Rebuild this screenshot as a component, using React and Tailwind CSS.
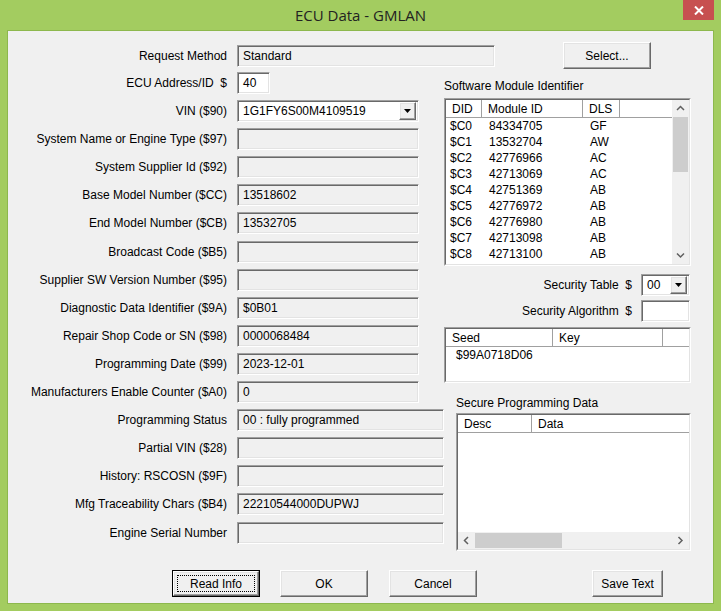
const SUNKEN =
  "border border-t-[#a0a0a0] border-l-[#a0a0a0] border-b-white border-r-white shadow-[inset_1px_1px_0_#696969,inset_-1px_-1px_0_#e3e3e3]";
const RAISED =
  "bg-[#f0f0f0] border border-t-white border-l-white border-b-[#696969] border-r-[#696969] shadow-[inset_-1px_-1px_0_#a0a0a0,inset_1px_1px_0_#e3e3e3]";

// filas de la columna izquierda
const leftRows = [
  { label: "ECU Address/ID  $", value: "40", w: "w-[33px]", white: true },
  { label: "VIN ($90)", value: "1G1FY6S00M4109519", combo: true },
  { label: "System Name or Engine Type ($97)", value: "", w: "w-[182px]" },
  { label: "System Supplier Id ($92)", value: "", w: "w-[182px]" },
  { label: "Base Model Number ($CC)", value: "13518602", w: "w-[182px]" },
  { label: "End Model Number ($CB)", value: "13532705", w: "w-[182px]" },
  { label: "Broadcast Code ($B5)", value: "", w: "w-[182px]" },
  { label: "Supplier SW Version Number ($95)", value: "", w: "w-[182px]" },
  { label: "Diagnostic Data Identifier ($9A)", value: "$0B01", w: "w-[182px]" },
  { label: "Repair Shop Code or SN ($98)", value: "0000068484", w: "w-[182px]" },
  { label: "Programming Date ($99)", value: "2023-12-01", w: "w-[182px]" },
  { label: "Manufacturers Enable Counter ($A0)", value: "0", w: "w-[182px]" },
  { label: "Programming Status", value: "00 : fully programmed", w: "w-[207px]" },
  { label: "Partial VIN ($28)", value: "", w: "w-[207px]" },
  { label: "History: RSCOSN ($9F)", value: "", w: "w-[207px]" },
  { label: "Mfg Traceability Chars ($B4)", value: "22210544000DUPWJ", w: "w-[207px]" },
  { label: "Engine Serial Number", value: "", w: "w-[207px]" },
];

const modules = [
  ["$C0", "84334705", "GF"],
  ["$C1", "13532704", "AW"],
  ["$C2", "42776966", "AC"],
  ["$C3", "42713069", "AC"],
  ["$C4", "42751369", "AB"],
  ["$C5", "42776972", "AB"],
  ["$C6", "42776980", "AB"],
  ["$C7", "42713098", "AB"],
  ["$C8", "42713100", "AB"],
];

const DropArrow = () => (
  <svg width="7" height="4" viewBox="0 0 7 4">
    <polygon points="0,0 7,0 3.5,4" fill="#000" />
  </svg>
);

const Chevron = ({ dir }) => {
  const pts = {
    up: "1,5 4.5,1.5 8,5",
    down: "1,1.5 4.5,5 8,1.5",
    left: "5,1 1.5,4.5 5,8",
    right: "1.5,1 5,4.5 1.5,8",
  }[dir];
  const vert = dir === "up" || dir === "down";
  return (
    <svg width={vert ? 9 : 7} height={vert ? 7 : 9} viewBox={vert ? "0 0 9 7" : "0 0 7 9"}>
      <polyline points={pts} fill="none" stroke="#606060" strokeWidth="1.5" />
    </svg>
  );
};

const Combo = ({ value, w }) => (
  <div className={`${SUNKEN} bg-white h-[22px] ${w} flex items-center pl-[5px] pr-[2px]`}>
    <span className="flex-1">{value}</span>
    <div className={`${RAISED} w-[17px] h-[18px] flex items-center justify-center`}>
      <DropArrow />
    </div>
  </div>
);

const Field = ({ value, w, white }) => (
  <div
    className={`${SUNKEN} h-[22px] ${w} ${white ? "bg-white" : "bg-[#f0f0f0]"} flex items-center pl-[5px]`}
  >
    {value}
  </div>
);

const Button = ({ label, w, focused }) =>
  focused ? (
    <div className={`border border-black ${w} h-[27px]`}>
      <div className={`${RAISED} h-full p-[3px]`}>
        <div className="h-full border border-dotted border-black flex items-center justify-center">
          {label}
        </div>
      </div>
    </div>
  ) : (
    <div className={`${RAISED} ${w} h-[27px] flex items-center justify-center`}>{label}</div>
  );

// cabecera de columna tipo ListView
const HeadCell = ({ label, w, pl }) => (
  <div className={`${w} ${pl} h-full flex items-center border-r border-r-[#a0a0a0] shadow-[1px_0_0_white]`}>
    {label}
  </div>
);

const App = () => {
  return (
    <div className="w-[721px] h-[611px] bg-[#a3cc60] flex flex-col font-['Liberation_Sans',Arial,sans-serif] text-[12px] text-black">
      {/* Barra de título */}
      <div className="h-[30px] flex items-start">
        <div className="w-[38px]" />
        <div className="flex-1 h-[30px] flex items-center justify-center font-['Open_Sans',sans-serif] text-[15px] text-[#222]">
          ECU Data - GMLAN
        </div>
        <div className="w-[31px] h-[20px] bg-[#c75050] flex items-center justify-center mr-[7px]">
          <svg width="10" height="9" viewBox="0 0 10 9">
            <path d="M1 0.5 L9 8.5 M9 0.5 L1 8.5" stroke="white" strokeWidth="2" />
          </svg>
        </div>
      </div>

      {/* Área cliente */}
      <div className="mx-[7px] mb-[7px] flex-1 border border-[#8db84d] bg-[#f0f0f0] flex flex-col">
        {/* Request Method + Select */}
        <div className="mt-[12px] h-[25px] flex items-center">
          <div className="w-[219px] text-right">Request Method</div>
          <div className="ml-[10px]">
            <Field value="Standard" w="w-[258px]" />
          </div>
          <div className="ml-[68px]">
            <Button label="Select..." w="w-[88px]" />
          </div>
        </div>

        <div className="flex mt-[4px]">
          {/* Columna izquierda */}
          <div className="w-[436px] flex flex-col gap-[6.1px]">
            {leftRows.map((r, i) => (
              <div key={i} className="h-[22px] flex items-center">
                <div className="w-[219px] text-right whitespace-pre">{r.label}</div>
                <div className="ml-[10px]">
                  {r.combo ? (
                    <Combo value={r.value} w="w-[182px]" />
                  ) : (
                    <Field value={r.value} w={r.w} white={r.white} />
                  )}
                </div>
              </div>
            ))}
          </div>

          {/* Columna derecha */}
          <div className="w-[247px] flex flex-col">
            <div className="mt-[7px] leading-[14px]">Software Module Identifier</div>

            <div className="mt-[5px] h-[168px] border border-t-[#a0a0a0] border-l-[#a0a0a0] border-b-white border-r-white">
              <div className="h-full border border-t-[#696969] border-l-[#696969] border-b-[#e3e3e3] border-r-[#e3e3e3] flex bg-white">
                <div className="flex-1 flex flex-col">
                  <div className="h-[18px] flex border-b border-b-[#a0a0a0]">
                    <HeadCell label="DID" w="w-[36px]" pl="pl-[6px]" />
                    <HeadCell label="Module ID" w="w-[101px]" pl="pl-[6px]" />
                    <HeadCell label="DLS" w="w-[37px]" pl="pl-[6px]" />
                  </div>
                  {modules.map((m) => (
                    <div key={m[0]} className="h-[16px] flex items-center">
                      <div className="w-[36px] pl-[4px]">{m[0]}</div>
                      <div className="w-[101px] pl-[7px]">{m[1]}</div>
                      <div className="w-[37px] pl-[7px]">{m[2]}</div>
                    </div>
                  ))}
                </div>
                {/* Barra de desplazamiento vertical */}
                <div className="w-[17px] bg-[#f0f0f0] flex flex-col items-center">
                  <div className="h-[17px] flex items-center justify-center">
                    <Chevron dir="up" />
                  </div>
                  <div className="w-[15px] h-[55px] bg-[#cdcdcd]" />
                  <div className="flex-1" />
                  <div className="h-[17px] flex items-center justify-center">
                    <Chevron dir="down" />
                  </div>
                </div>
              </div>
            </div>

            {/* Seguridad */}
            <div className="mt-[7px] h-[23px] flex items-center justify-end mr-[1px]">
              <span className="whitespace-pre">Security Table  $</span>
              <div className="ml-[9px]">
                <Combo value="00" w="w-[49px]" />
              </div>
            </div>
            <div className="mt-[4px] h-[22px] flex items-center justify-end mr-[1px]">
              <span className="whitespace-pre">Security Algorithm  $</span>
              <div className="ml-[9px]">
                <Field value="" w="w-[49px]" white />
              </div>
            </div>

            {/* Seed / Key */}
            <div className="mt-[5px] h-[56px] border border-t-[#a0a0a0] border-l-[#a0a0a0] border-b-white border-r-white">
              <div className="h-full border border-t-[#696969] border-l-[#696969] border-b-[#e3e3e3] border-r-[#e3e3e3] flex flex-col bg-white">
                <div className="h-[18px] flex border-b border-b-[#a0a0a0]">
                  <HeadCell label="Seed" w="w-[107px]" pl="pl-[6px]" />
                  <HeadCell label="Key" w="w-[110px]" pl="pl-[6px]" />
                </div>
                <div className="h-[16px] flex items-center pl-[10px]">$99A0718D06</div>
              </div>
            </div>

            {/* Secure Programming Data */}
            <div className="mt-[13px] ml-[12px] leading-[14px]">Secure Programming Data</div>
            <div className="mt-[3px] ml-[12px] h-[138px] border border-t-[#a0a0a0] border-l-[#a0a0a0] border-b-white border-r-white">
              <div className="h-full border border-t-[#696969] border-l-[#696969] border-b-[#e3e3e3] border-r-[#e3e3e3] flex flex-col bg-white">
                <div className="h-[18px] flex border-b border-b-[#a0a0a0]">
                  <HeadCell label="Desc" w="w-[74px]" pl="pl-[6px]" />
                  <div className="flex-1 pl-[6px] flex items-center">Data</div>
                </div>
                <div className="flex-1" />
                {/* Barra horizontal */}
                <div className="h-[17px] bg-[#f0f0f0] flex items-center">
                  <div className="w-[17px] h-full flex items-center justify-center">
                    <Chevron dir="left" />
                  </div>
                  <div className="w-[87px] h-[15px] bg-[#cdcdcd]" />
                  <div className="flex-1" />
                  <div className="w-[17px] h-full flex items-center justify-center">
                    <Chevron dir="right" />
                  </div>
                </div>
              </div>
            </div>
          </div>
        </div>

        {/* Botones inferiores */}
        <div className="mt-auto mb-[6px] flex pl-[164px]">
          <Button label="Read Info" w="w-[88px]" focused />
          <div className="ml-[20px]">
            <Button label="OK" w="w-[88px]" />
          </div>
          <div className="ml-[21px]">
            <Button label="Cancel" w="w-[88px]" />
          </div>
          <div className="ml-[115px]">
            <Button label="Save Text" w="w-[71px]" />
          </div>
        </div>
      </div>
    </div>
  );
};

export default App;
